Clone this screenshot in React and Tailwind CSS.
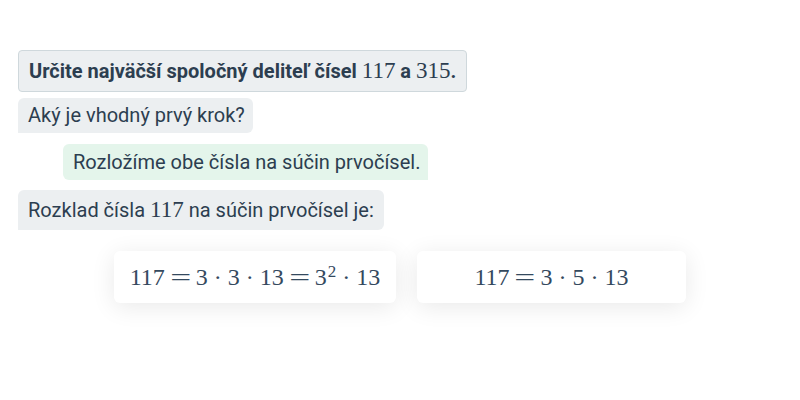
import React from 'react';

const Eq = () => (
  <span className="inline-block mx-[5px] w-[21px] text-center">
    <span className="inline-block scale-x-[1.55]">=</span>
  </span>
);
const Dot = () => <span className="mx-[6px]">·</span>;

const M = ({ children }) => (
  <span className="font-['Liberation_Serif',serif] font-normal text-[23px]">{children}</span>
);

const Card = ({ width, children }) => (
  <div
    className={`${width} h-[52px] bg-white rounded-md shadow-[0_4px_24px_rgba(0,0,0,0.09)] flex items-center justify-center font-['Liberation_Serif',serif] text-[24px] text-[#34495e]`}
  >
    {children}
  </div>
);

export default function App() {
  return (
    <div className="w-[800px] h-[400px] bg-white pt-[50px] px-[18px] font-['Roboto',sans-serif] text-[20px] text-[#2c3e50]">
      <div className="flex flex-col items-start">
        <div className="bg-[#eceff1] border border-[#cfd8dc] rounded-[4px] px-[10px] py-[6px] leading-[28px] font-bold">
          Určite najväčší spoločný deliteľ čísel <M>117</M> a <M>315</M>.
        </div>

        <div className="mt-[6px] bg-[#eceff1] rounded-t-[6px] rounded-br-[6px] pl-[10px] pr-[8px] py-1 leading-[27px]">
          Aký je vhodný prvý krok?
        </div>

        <div className="mt-[11px] ml-[45px] bg-[#e4f5eb] rounded-t-[6px] rounded-bl-[6px] pl-[10px] pr-[8px] py-1 leading-[28px]">
          Rozložíme obe čísla na súčin prvočísel.
        </div>

        <div className="mt-[10px] bg-[#eceff1] rounded-t-[6px] rounded-br-[6px] px-[10px] py-[6px] leading-[28px]">
          Rozklad čísla <M>117</M> na súčin prvočísel je:
        </div>
      </div>

      <div className="mt-[21px] flex justify-center gap-[21px]">
        <Card width="w-[282px]">
          117<Eq />3<Dot />3<Dot />13<Eq />3<sup className="text-[17px] relative -top-[5px] ml-[1px]">2</sup><Dot />13
        </Card>
        <Card width="w-[269px]">
          117<Eq />3<Dot />5<Dot />13
        </Card>
      </div>
    </div>
  );
}
